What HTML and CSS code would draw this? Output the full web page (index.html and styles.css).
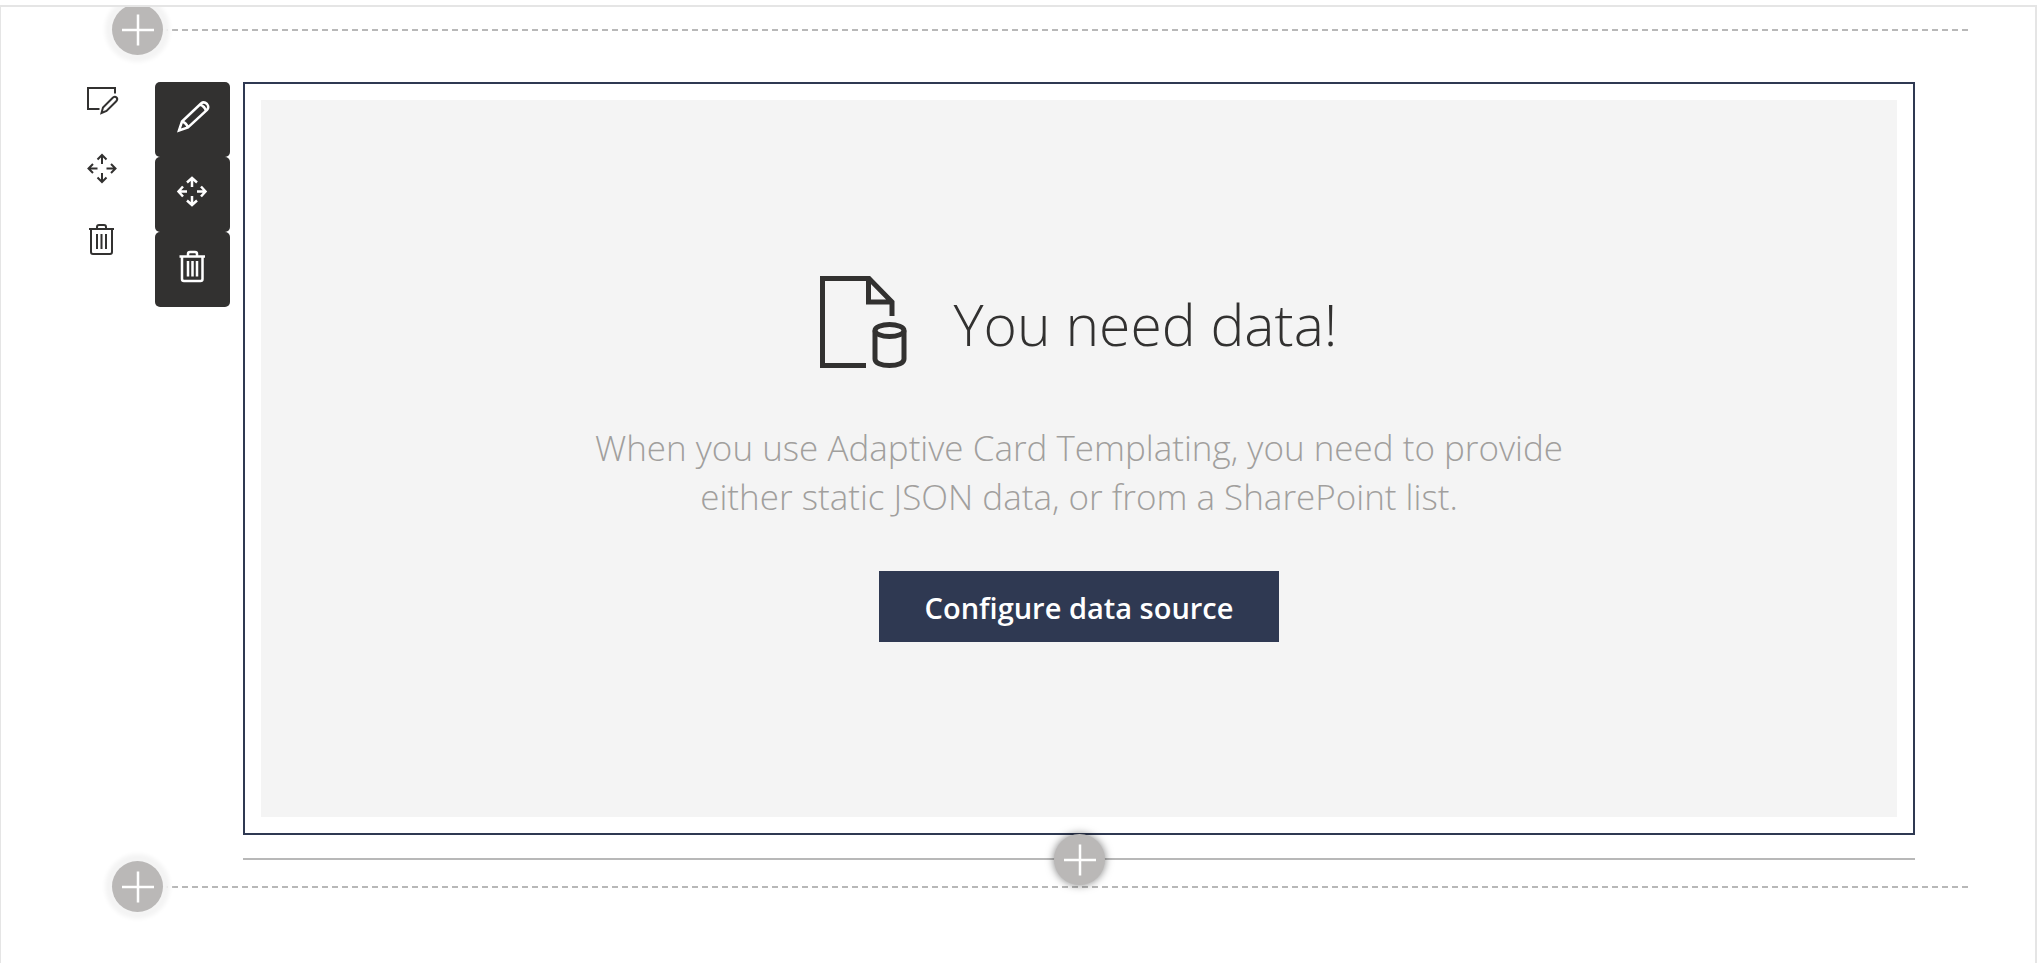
FILE: index.html
```html
<!DOCTYPE html>
<html lang="en">
<head>
<meta charset="utf-8">
<title>Adaptive Card web part</title>
<link rel="stylesheet" href="styles.css">
</head>
<body>
<main class="canvas">
  <div class="section-insert section-insert-first">
    <button class="add-button add-section" type="button" aria-label="Add a new section">
      <svg class="plus" viewBox="0 0 32 32" aria-hidden="true"><path d="M16 0.500V31.500M0 16H32"/></svg>
    </button>
    <div class="dashes"></div>
  </div>

  <section class="zone">
    <div class="section-tools" role="toolbar" aria-label="Section">
      <button class="section-tool" type="button" aria-label="Edit section">
        <svg viewBox="0 0 36 36" aria-hidden="true"><path d="M30 11.500V6H3V27H14.500"/><path d="M16.500 31L18 25.500L28 15.500Q30 14 31.500 15.500Q33 17 31.500 19L21.500 29Z"/></svg>
      </button>
      <button class="section-tool" type="button" aria-label="Move section">
        <svg viewBox="0 0 36 36" aria-hidden="true"><path d="M17 3V12M12.500 7.500L17 3L21.500 7.500M17 30V21M12.500 25.500L17 30L21.500 25.500M3.500 16.500H12.500M8 12L3.500 16.500L8 21M30.500 16.500H21.500M26 12L30.500 16.500L26 21"/></svg>
      </button>
      <button class="section-tool" type="button" aria-label="Delete section">
        <svg viewBox="0 0 36 36" aria-hidden="true"><path d="M4 7H29M12 7V5Q12 3 14 3H19Q21 3 21 5V7M6 7V30Q6 32 8 32H25Q27 32 27 30V7M12 12V27M16.500 12V27M21 12V27"/></svg>
      </button>
    </div>

    <div class="part-tools" role="toolbar" aria-label="Web part">
      <button class="part-tool" type="button" aria-label="Edit web part">
        <svg viewBox="0 0 36 36" aria-hidden="true"><path class="bold" d="M4 31.500L7 22.500L26 4.500Q29 2 32 5Q34.500 8 32 11L13 28.500ZM7 22.500Q11.500 24 13 28.500M24.500 5.500Q30 7 31 12.500"/></svg>
      </button>
      <button class="part-tool" type="button" aria-label="Move web part">
        <svg viewBox="0 0 36 36" aria-hidden="true"><path class="bold" d="M17 4V13M12 8.500L17 4L22 8.500M17 31V22M12 26.500L17 31L22 26.500M3.500 17.500H12M8 12.500L3.500 17.500L8 22.500M30.500 17.500H22M26 12.500L30.500 17.500L26 22.500"/></svg>
      </button>
      <button class="part-tool" type="button" aria-label="Delete web part">
        <svg viewBox="0 0 36 36" aria-hidden="true"><path class="bold" d="M4.500 7.500H30M13 7.500V5Q13 3 15 3H20Q22 3 22 5V7.500M7 7.500V30Q7 32 9 32H25.500Q27.500 32 27.500 30V7.500M13 12V27.500M17.500 12V27.500M22 12V27.500"/></svg>
      </button>
    </div>

    <div class="column">
      <article class="web-part">
        <div class="placeholder">
          <div class="placeholder-head">
            <svg class="page-data-icon" viewBox="0 0 87 92" aria-hidden="true"><path d="M46 89.500H2.500V2.500H49L72 26V40M48.500 2.500V26H72"/><path d="M55 54.500V83C55 87 61 89.500 69.500 89.500S84 87 84 83V54.500"/><ellipse cx="69.500" cy="54.500" rx="14.500" ry="6"/></svg>
            <h1 class="title">You need data!</h1>
          </div>
          <p class="description">When you use Adaptive Card Templating, you need to provide either static JSON data, or from a SharePoint list.</p>
          <button class="configure" type="button">Configure data source</button>
        </div>
      </article>
      <div class="part-insert">
        <button class="add-button add-part" type="button" aria-label="Add a new web part">
          <svg class="plus" viewBox="0 0 32 32" aria-hidden="true"><path d="M16 0.500V31.500M0 16H32"/></svg>
        </button>
      </div>
    </div>
  </section>

  <div class="section-insert">
    <button class="add-button add-section" type="button" aria-label="Add a new section below">
      <svg class="plus" viewBox="0 0 32 32" aria-hidden="true"><path d="M16 0.500V31.500M0 16H32"/></svg>
    </button>
    <div class="dashes"></div>
  </div>
</main>
</body>
</html>
```

FILE: styles.css
```css
* {
  box-sizing: border-box;
}

body {
  margin: 0;
  padding-top: 5px;
  background: #fff;
  color: #323130;
  font-family: "Open Sans", "Noto Sans", sans-serif;
}

button {
  margin: 0;
  padding: 0;
  border: 0;
  background: none;
  font: inherit;
  cursor: pointer;
}

svg {
  display: block;
  fill: none;
  stroke: currentColor;
}

.canvas {
  min-height: calc(100vh - 5px);
  overflow: hidden;
  border: 2px solid #e5e5e5;
  border-left-width: 1px;
  border-bottom: 0;
}

.section-insert {
  display: flex;
  align-items: center;
  padding: 0 67px 0 111px;
}

.section-insert-first {
  margin-top: -3px;
}

.dashes {
  flex: 1;
  height: 2px;
  background: repeating-linear-gradient(to left, #b8b8b8 0 6px, transparent 6px 10px);
}

.add-button {
  display: flex;
  align-items: center;
  justify-content: center;
  width: 51px;
  height: 51px;
  border-radius: 50%;
  background: #bab8b7;
  color: #fff;
}

.add-section {
  position: relative;
  box-shadow: 0 0 4px 7px #f4f4f4;
}

.plus {
  width: 32px;
  height: 32px;
  stroke-width: 2.5;
}

.zone {
  display: flex;
  align-items: flex-start;
  margin-top: 27px;
  padding: 0 120px 0 84px;
}

.section-tools {
  display: flex;
  flex-direction: column;
  gap: 34px;
  margin-right: 34px;
}

.section-tool svg,
.part-tool svg {
  width: 36px;
  height: 36px;
  stroke-width: 2;
}

.section-tool {
  color: #323130;
}

.part-tools {
  margin-right: 13px;
}

.part-tool {
  display: flex;
  align-items: center;
  justify-content: center;
  width: 75px;
  height: 75px;
  padding-bottom: 6px;
  border-radius: 5px;
  background: #323130;
  color: #fff;
}

.part-tool .bold {
  stroke-width: 2.5;
}

.column {
  flex: 1;
}

.web-part {
  padding: 16px;
  border: 2px solid #2f3952;
}

.placeholder {
  display: flex;
  flex-direction: column;
  align-items: center;
  padding: 176px 16px 175px;
  background: #f4f4f4;
}

.placeholder-head {
  display: flex;
  align-items: center;
  gap: 46px;
}

.page-data-icon {
  width: 87px;
  height: 92px;
  stroke-width: 5;
}

.title {
  margin: 0;
  padding-top: 4px;
  font-size: 57px;
  font-weight: 300;
  line-height: 88px;
}

.description {
  max-width: 1000px;
  margin: 55px 0 50px;
  color: #a19f9d;
  font-size: 35px;
  font-weight: 300;
  line-height: 49px;
  text-align: center;
}

.configure {
  height: 71px;
  padding: 2px 46px 0;
  background: #2f3952;
  color: #fff;
  font-size: 29px;
  font-weight: 600;
}

.part-insert {
  position: relative;
  height: 25px;
  margin-bottom: 1px;
  border-bottom: 2px solid #b8b8b8;
}

.add-part {
  position: absolute;
  bottom: -27px;
  left: 50%;
  margin-left: -25px;
  box-shadow: 0 0 9px rgba(0, 0, 0, 0.5);
}
```
